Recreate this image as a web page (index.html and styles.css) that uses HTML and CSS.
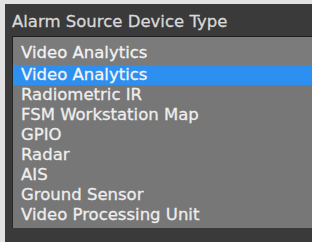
FILE: index.html
```html
<!DOCTYPE html>
<html lang="en">
<head>
    <meta charset="utf-8">
    <title>Alarm Source Device Type</title>
    <link rel="stylesheet" href="styles.css">
</head>
<body>
<div class="panel">
    <div class="title">Alarm Source Device Type</div>
    <div class="dropdown">
        <div class="current">Video Analytics</div>
        <ul class="options">
            <li class="selected">Video Analytics</li>
            <li>Radiometric IR</li>
            <li>FSM Workstation Map</li>
            <li>GPIO</li>
            <li>Radar</li>
            <li>AIS</li>
            <li>Ground Sensor</li>
            <li>Video Processing Unit</li>
        </ul>
    </div>
</div>
</body>
</html>
```

FILE: styles.css
```css
*{
    margin:0;
    padding:0;
    box-sizing:border-box;
}
html,body{
    height:100%;
    overflow:hidden;
}
body{
    background:#e2e2e2;
    font-family:"DejaVu Sans", Verdana, sans-serif;
    font-size:16.5px;
    padding:4px 0 0 5px;
}
.panel{
    height:100%;
    background:#3a3a3a;
    padding:8px 0 0 7px;
}
.title{
    color:#d8d8d8;
    line-height:20px;
    height:24px;
    -webkit-text-stroke:0.3px #d8d8d8;
}
.current{
    height:29px;
    background:#7b7b7b;
    border-top:1px solid #1e1e1e;
    border-left:1px solid #1e1e1e;
    color:#f2f2f2;
    line-height:20px;
    padding:6px 0 0 8px;
    -webkit-text-stroke:0.3px #f2f2f2;
}
.options{
    list-style:none;
    background:#777777;
    border-left:1px solid #262626;
    padding-bottom:3px;
}
.options li{
    height:20px;
    line-height:20px;
    padding-left:8px;
    color:#eeeeee;
    -webkit-text-stroke:0.3px #eeeeee;
}
.options li.selected{
    background:#2d8ff0;
    color:#f6f8fb;
}
```
